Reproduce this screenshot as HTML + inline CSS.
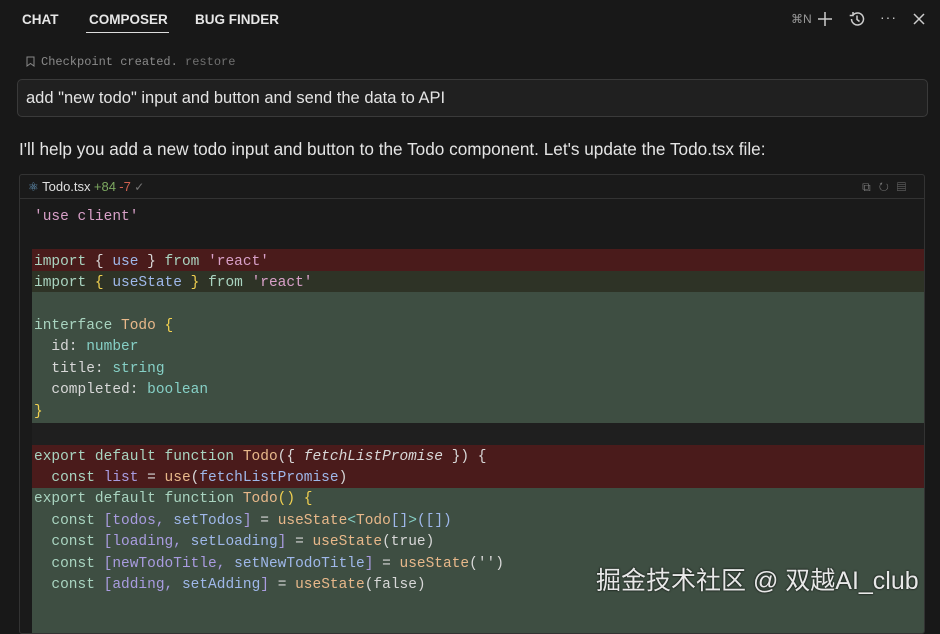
<!DOCTYPE html>
<html><head><meta charset="utf-8"><style>
*{margin:0;padding:0;box-sizing:border-box}
body{width:940px;height:611px;background:#181818;overflow:hidden;position:relative;font-family:"Liberation Sans",sans-serif;color:#ddd}
.tab{position:absolute;top:12px;font-size:13.5px;font-weight:bold;color:#e6e6e6}
.mono{font-family:"Liberation Mono",monospace}
.code{position:absolute;left:19px;top:174px;width:906px;height:460px;border:1px solid #333;border-radius:3px;overflow:hidden;background:#1a1a1a}
.hdr{height:24px;border-bottom:1px solid #333;font-size:12px;line-height:24px;padding-left:8px}
.band{position:absolute;left:12px;right:0}
.ln{position:absolute;left:14px;font-family:"Liberation Mono",monospace;font-size:14.5px;white-space:pre;color:#c8d6c8;line-height:20px}
.k{color:#a9d4c0}.s{color:#d8a0c8}.b{color:#9fb8ea}.o{color:#e8b88a}.y{color:#f0d050}.t{color:#86d0c6}.p{color:#a99ce0}.w{color:#d8d8d8}
</style></head><body>
<div class="tab" style="left:22px">CHAT</div>
<div class="tab" style="left:89px">COMPOSER</div>
<div style="position:absolute;left:86px;top:32px;width:83px;height:1px;background:#ddd"></div>
<div class="tab" style="left:195px">BUG FINDER</div>
<div style="position:absolute;left:791px;top:12px;font-size:12px;color:#999">⌘N</div>
<svg style="position:absolute;left:816px;top:10px" width="18" height="18" stroke="#ccc" stroke-width="1.5" fill="none"><path d="M9 2v14M2 9h14"/></svg>
<svg style="position:absolute;left:848px;top:10px" width="18" height="18" stroke="#ccc" stroke-width="1.5" fill="none"><path d="M3.5 9a6 6 0 1 0 1.8-4.3"/><path d="M5 2v3.5h-3.3"/><path d="M9 5.5v4l2.5 2"/></svg>
<div style="position:absolute;left:880px;top:9px;font-size:14px;color:#ccc;letter-spacing:1px">···</div>
<svg style="position:absolute;left:912px;top:12px" width="14" height="14" stroke="#ccc" stroke-width="1.5"><path d="M2 2l10 10M12 2L2 12"/></svg>
<svg style="position:absolute;left:26px;top:56px" width="9" height="11" stroke="#888" fill="none"><path d="M1 1h7v9L4.5 7.5 1 10z"/></svg>
<div class="mono" style="position:absolute;left:41px;top:55px;font-size:12px;color:#8a8a8a">Checkpoint created. <span style="color:#707070">restore</span></div>
<div style="position:absolute;left:17px;top:79px;width:911px;height:38px;border:1px solid #3a3a3a;border-radius:5px;background:#202020;font-size:16.5px;line-height:36px;padding-left:8px;color:#e4e4e4">add "new todo" input and button and send the data to API</div>
<div style="position:absolute;left:19px;top:139px;font-size:17.2px;color:#e4e4e4">I'll help you add a new todo input and button to the Todo component. Let's update the Todo.tsx file:</div>
<div class="code">
<div class="hdr"><span style="color:#6aa0c8">⚛</span> <span style="color:#e0e0e0;font-size:13px">Todo.tsx</span> <span style="color:#7ca860;font-size:13px">+84</span> <span style="color:#d06050;font-size:13px">-7</span> <span style="color:#777">✓</span>
<span style="position:absolute;right:10px;top:0;color:#777;letter-spacing:8px">⧉↻▤</span></div>
<div class="band" style="top:74px;height:22px;background:#4a1b1b"></div>
<div class="band" style="top:96px;height:21px;background:#2e3326"></div>
<div class="band" style="top:117px;height:131px;background:#3e4e42"></div>
<div class="band" style="top:248px;height:22px;background:#1f1f1f"></div>
<div class="band" style="top:270px;height:43px;background:#4a1b1b"></div>
<div class="band" style="top:313px;height:160px;background:#3e4e42"></div>
<div class="ln" style="top:32px"><span class="s">'use client'</span></div>
<div class="ln" style="top:77px"><span class="k">import</span> <span class="w">{</span> <span class="b">use</span> <span class="w">}</span> <span class="k">from</span> <span class="s">'react'</span></div>
<div class="ln" style="top:98px"><span class="k">import</span> <span class="y">{</span> <span class="b">useState</span> <span class="y">}</span> <span class="k">from</span> <span class="s">'react'</span></div>
<div class="ln" style="top:141px"><span class="k">interface</span> <span class="o">Todo</span> <span class="y">{</span></div>
<div class="ln" style="top:162px">  <span class="w">id:</span> <span class="t">number</span></div>
<div class="ln" style="top:184px">  <span class="w">title:</span> <span class="t">string</span></div>
<div class="ln" style="top:205px">  <span class="w">completed:</span> <span class="t">boolean</span></div>
<div class="ln" style="top:227px"><span class="y">}</span></div>
<div class="ln" style="top:272px"><span class="k">export default function</span> <span class="o">Todo</span><span class="w">({ <i>fetchListPromise</i> }) {</span></div>
<div class="ln" style="top:293px">  <span class="k">const</span> <span class="p">list</span> <span class="w">=</span> <span class="o">use</span><span class="w">(</span><span class="b">fetchListPromise</span><span class="w">)</span></div>
<div class="ln" style="top:314px"><span class="k">export default function</span> <span class="o">Todo</span><span class="y">() {</span></div>
<div class="ln" style="top:336px">  <span class="k">const</span> <span class="p">[todos, </span><span class="b">setTodos</span><span class="p">]</span> <span class="w">=</span> <span class="o">useState</span><span class="t">&lt;</span><span class="o">Todo</span><span class="b">[]</span><span class="t">&gt;</span><span class="b">([])</span></div>
<div class="ln" style="top:357px">  <span class="k">const</span> <span class="p">[loading, </span><span class="b">setLoading</span><span class="p">]</span> <span class="w">=</span> <span class="o">useState</span><span class="w">(true)</span></div>
<div class="ln" style="top:379px">  <span class="k">const</span> <span class="p">[newTodoTitle, </span><span class="b">setNewTodoTitle</span><span class="p">]</span> <span class="w">=</span> <span class="o">useState</span><span class="w">('')</span></div>
<div class="ln" style="top:400px">  <span class="k">const</span> <span class="p">[adding, </span><span class="b">setAdding</span><span class="p">]</span> <span class="w">=</span> <span class="o">useState</span><span class="w">(false)</span></div>
</div>
<div style="position:absolute;left:596px;top:561px;font-family:'Liberation Sans','Noto Sans CJK SC',sans-serif;font-size:25px;color:#e8e8e8;text-shadow:0 0 2px #000;white-space:nowrap">掘金技术社区 @ 双越AI_club</div>
</body></html>
